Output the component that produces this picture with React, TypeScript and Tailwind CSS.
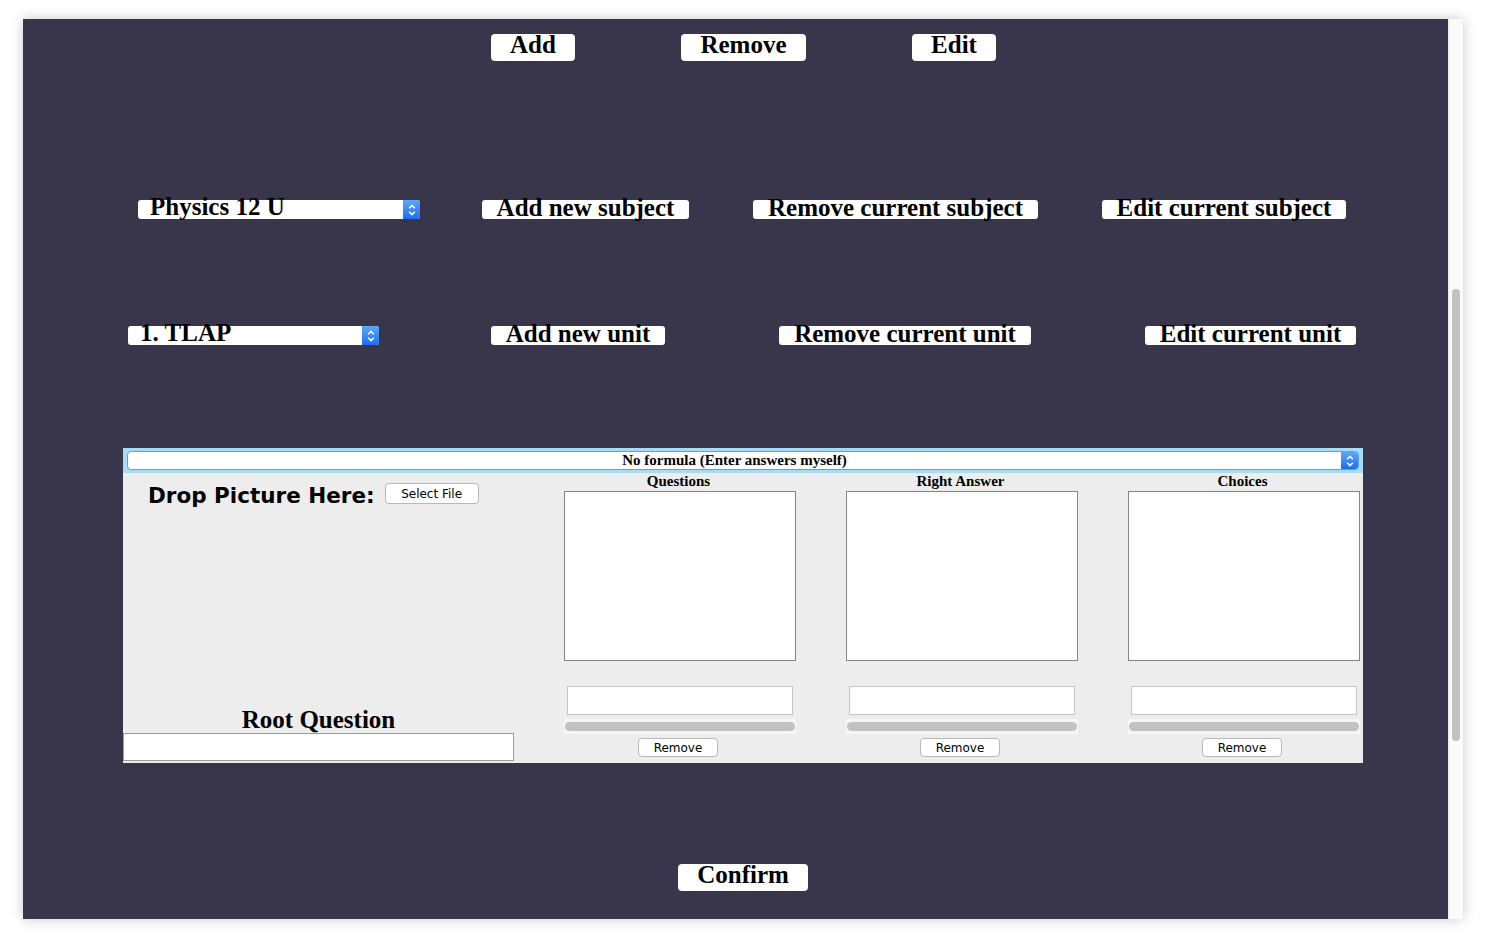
import React from 'react';

const serif = "font-['Liberation_Serif','Times_New_Roman',serif]";
const sans = "font-['DejaVu_Sans','Lucida_Grande',sans-serif]";

function Stepper() {
  return (
    <span className="flex h-full w-[17px] shrink-0 items-center justify-center rounded-r-[3px] bg-linear-to-b from-[#5ea6f8] to-[#1b6df0]">
      <svg width="8" height="14" viewBox="0 0 8 14" fill="none">
        <path d="M1.2 5.2 L4 2.4 L6.8 5.2 M1.2 8.8 L4 11.6 L6.8 8.8" stroke="white" strokeWidth="1.5" />
      </svg>
    </span>
  );
}

function BigButton({ label, className }: { label: string; className: string }) {
  return (
    <button className={`h-[27px] shrink-0 rounded-[4px] bg-white pb-[5px] text-center text-[25px] font-bold leading-[20px] text-black ${serif} ${className}`}>
      {label}
    </button>
  );
}

function RowButton({ label, className }: { label: string; className: string }) {
  return (
    <button className={`h-[19px] shrink-0 rounded-[3px] bg-white pb-[4px] text-center text-[25px] font-bold leading-[15px] text-black whitespace-nowrap ${serif} ${className}`}>
      {label}
    </button>
  );
}

function RowSelect({ label, className }: { label: string; className: string }) {
  return (
    <div className={`flex h-[19px] shrink-0 items-start rounded-[3px] bg-white ${className}`}>
      <span className={`flex-1 pl-[12px] text-[25px] font-bold leading-[14px] text-black whitespace-nowrap ${serif}`}>{label}</span>
      <Stepper />
    </div>
  );
}

function SmallButton({ label, className }: { label: string; className: string }) {
  return (
    <button className={`shrink-0 rounded-[4px] border border-[#b8b8b8] bg-white text-center text-[12px] leading-none text-black ${sans} ${className}`}>
      {label}
    </button>
  );
}

function ListColumn({ title }: { title: string }) {
  return (
    <div className="flex w-[232px] flex-col">
      <div className={`h-[18px] pr-[3px] text-center text-[15px] font-bold leading-[17px] text-black ${serif}`}>{title}</div>
      <div className="h-[170px] border border-[#858585] bg-white" />
      <div className="mx-[3px] mt-[25px] h-[29px] border border-[#c6c6c6] bg-white" />
      <div className="mt-[4px] bg-[#f6f6f6] px-[1px] py-[3px]">
        <div className="h-[9px] rounded-full bg-[#c2c2c2]" />
      </div>
      <SmallButton label="Remove" className="ml-[74px] mt-[4px] h-[19px] w-[80px]" />
    </div>
  );
}

export default function App() {
  return (
    <div className="h-[946px] w-[1486px] overflow-hidden bg-white pl-[23px] pt-[19px]">
      <div className="flex h-[900px] w-[1440px] shadow-[0_0_12px_rgba(0,0,0,0.22)]">
        <main className="flex h-full w-[1425px] flex-col bg-[#39354a]">
          {/* Top actions */}
          <div className="mt-[15px] flex">
            <BigButton label="Add" className="ml-[468px] w-[84px]" />
            <BigButton label="Remove" className="ml-[106px] w-[125px]" />
            <BigButton label="Edit" className="ml-[106px] w-[84px]" />
          </div>

          {/* Subject row */}
          <div className="mt-[139px] flex">
            <RowSelect label="Physics 12 U" className="ml-[115px] w-[282px]" />
            <RowButton label="Add new subject" className="ml-[62px] w-[207px]" />
            <RowButton label="Remove current subject" className="ml-[64px] w-[285px]" />
            <RowButton label="Edit current subject" className="ml-[64px] w-[244px]" />
          </div>

          {/* Unit row */}
          <div className="mt-[107px] flex">
            <RowSelect label="1. TLAP" className="ml-[105px] w-[251px]" />
            <RowButton label="Add new unit" className="ml-[112px] w-[174px]" />
            <RowButton label="Remove current unit" className="ml-[114px] w-[252px]" />
            <RowButton label="Edit current unit" className="ml-[114px] w-[211px]" />
          </div>

          {/* Question panel */}
          <section className="ml-[100px] mt-[103px] flex h-[315px] w-[1240px] flex-col bg-[#ededed]">
            <div className="h-[25px] bg-[#a8dcf6] px-[4px] py-[3px]">
              <div className="flex h-[19px] rounded-[4px] border border-[#5f9fe6] bg-white">
                <span className={`flex-1 text-center text-[15px] font-bold leading-[16px] text-black ${serif}`}>
                  No formula (Enter answers myself)
                </span>
                <Stepper />
              </div>
            </div>

            <div className="flex flex-1">
              <div className="flex w-[441px] flex-col">
                <div className="mt-[10px] flex items-start pl-[25px]">
                  <span className={`mt-[2px] text-[21.5px] font-bold leading-[22px] text-black ${sans}`}>Drop Picture Here:</span>
                  <SmallButton label="Select File" className="ml-[10px] h-[21px] w-[94px]" />
                </div>
                <div className="mt-auto w-[391px]">
                  <div className={`text-center text-[25px] font-bold leading-[26px] text-black ${serif}`}>Root Question</div>
                  <div className="h-[28px] border border-[#9a9a9a] bg-white" />
                </div>
                <div className="h-[2px]" />
              </div>
              <ListColumn title="Questions" />
              <div className="w-[50px]" />
              <ListColumn title="Right Answer" />
              <div className="w-[50px]" />
              <ListColumn title="Choices" />
            </div>
          </section>

          <div className="mt-[101px] flex">
            <BigButton label="Confirm" className="ml-[655px] w-[130px]" />
          </div>
        </main>

        {/* Scrollbar */}
        <div className="flex w-[15px] justify-center border-l border-[#ececec] bg-[#fafafa] pt-[270px]">
          <div className="h-[452px] w-[8px] rounded-full bg-[#c2c2c2]" />
        </div>
      </div>
    </div>
  );
}
